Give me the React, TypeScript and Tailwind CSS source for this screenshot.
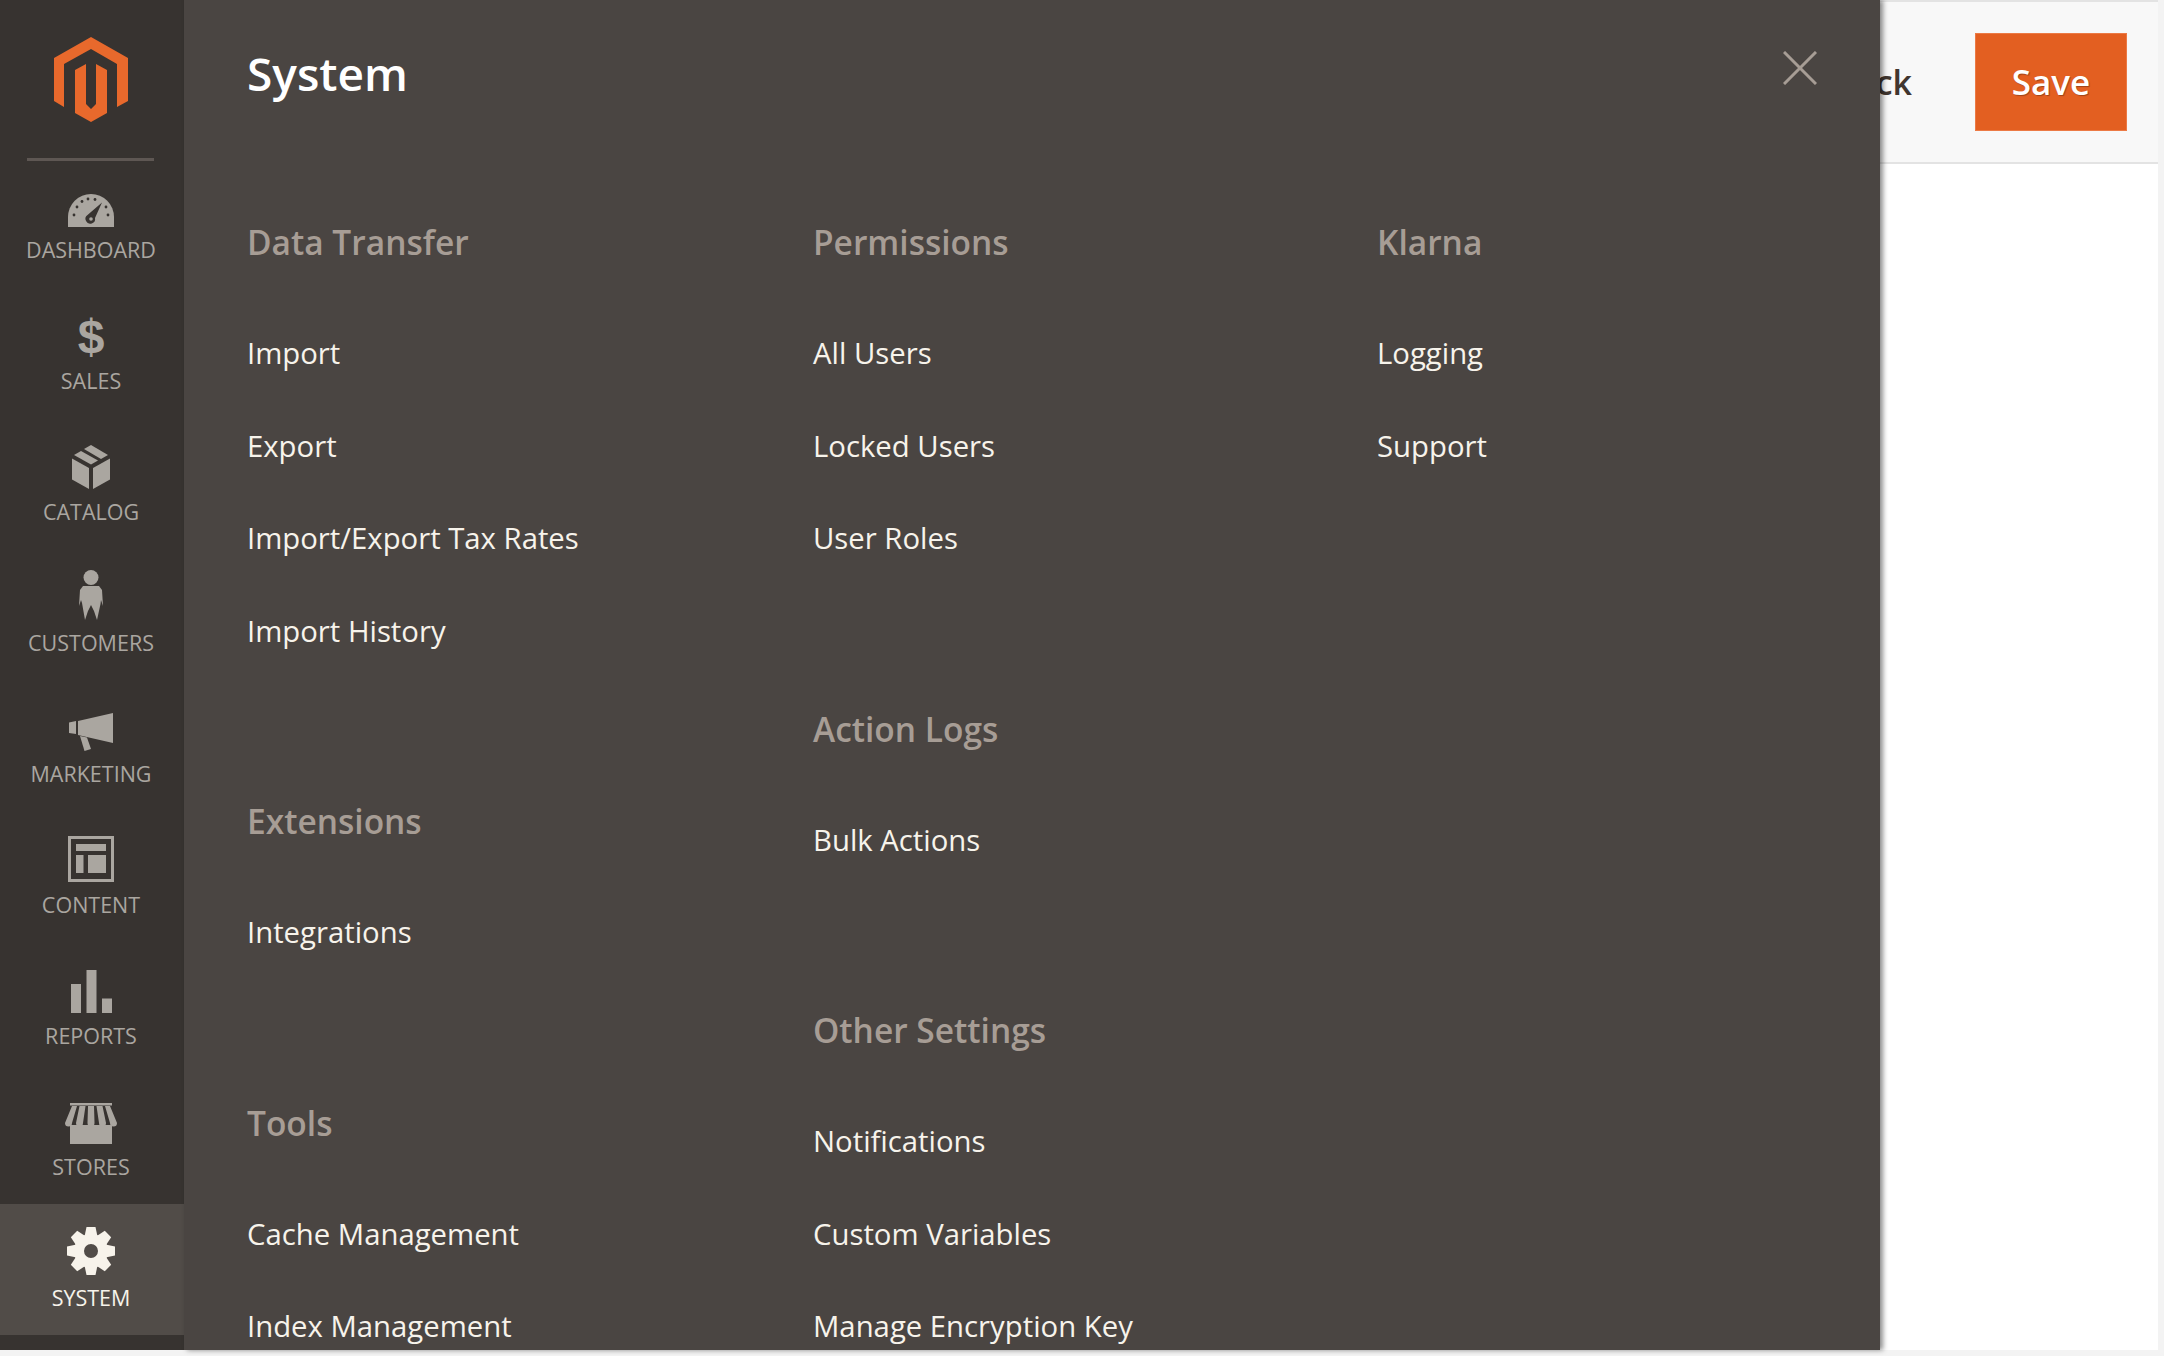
const columns = [
  [
    { title: 'Data Transfer', links: ['Import', 'Export', 'Import/Export Tax Rates', 'Import History'] },
    { title: 'Extensions', links: ['Integrations'] },
    { title: 'Tools', links: ['Cache Management', 'Index Management'] },
  ],
  [
    { title: 'Permissions', links: ['All Users', 'Locked Users', 'User Roles'] },
    { title: 'Action Logs', links: ['Bulk Actions'] },
    { title: 'Other Settings', links: ['Notifications', 'Custom Variables', 'Manage Encryption Key'] },
  ],
  [{ title: 'Klarna', links: ['Logging', 'Support'] }],
];

function DashboardIcon() {
  return (
    <svg width="46" height="33" viewBox="0 0 46 33">
      <path d="M0 33V23A23 23 0 0 1 46 23V33Z" fill="currentColor" />
      <g fill="#373330">
        <circle cx="6" cy="21" r="1.400" />
        <circle cx="9" cy="13" r="1.400" />
        <circle cx="14" cy="7.500" r="1.400" />
        <circle cx="20" cy="5" r="1.400" />
        <circle cx="27" cy="5.500" r="1.400" />
        <circle cx="38" cy="13" r="1.400" />
        <circle cx="40" cy="21" r="1.400" />
        <path d="M34 8.500 27 24A4.800 4.800 0 1 1 19.500 21Z" />
      </g>
      <circle cx="23" cy="25" r="1.800" fill="currentColor" />
    </svg>
  );
}

function CatalogIcon() {
  return (
    <svg width="38" height="44" viewBox="0 0 38 44" fill="currentColor">
      <path d="M0 13.500 17 23V44L0 34.500Z" />
      <path d="M21 23 38 13.500V34.500L21 44Z" />
      <path d="M2 10 9 6 26 15.500 19 19.500Z" />
      <path d="M12 4 19 0 36 10 29 14Z" />
    </svg>
  );
}

function CustomersIcon() {
  return (
    <svg width="24" height="50" viewBox="0 0 24 50" fill="currentColor">
      <circle cx="12" cy="7.500" r="7.500" />
      <path d="M4 16H20L23 20 24 36 22 30 21.500 34 18 50 15 41 12 35 9 41 6 50 3 33 2 30 0 36 1 20Z" />
    </svg>
  );
}

function MarketingIcon() {
  return (
    <svg width="45" height="38" viewBox="0 0 45 38" fill="currentColor">
      <path d="M0 9.500 7 8V21L0 20Z" />
      <path d="M9 8 44 0V30L9 22Z" />
      <path d="M11 23 18 24.500 22 36 15.500 38Z" />
    </svg>
  );
}

function ContentIcon() {
  return (
    <svg width="46" height="46" viewBox="0 0 46 46" fill="currentColor">
      <path fillRule="evenodd" d="M0 0H46V46H0ZM3 3V43H43V3Z" />
      <rect x="8" y="8" width="30" height="7" />
      <rect x="8" y="19" width="7.500" height="18" />
      <rect x="20" y="19" width="18" height="18" />
    </svg>
  );
}

function ReportsIcon() {
  return (
    <svg width="41" height="43" viewBox="0 0 41 43" fill="currentColor">
      <rect x="0" y="14" width="10" height="29" />
      <rect x="15.500" y="0" width="10" height="43" />
      <rect x="31" y="28.500" width="10" height="14.500" />
    </svg>
  );
}

function StoresIcon() {
  return (
    <svg width="52" height="41" viewBox="0 0 52 41" fill="currentColor">
      <rect x="5" y="0" width="42" height="2.500" />
      <rect x="5" y="22" width="42" height="19" />
      <path d="M7 3H12L7 20A3.500 3.500 0 0 1 0 20Z" />
      <path d="M14.500 3H20.500L18 20A3.500 3.500 0 0 1 11 20Z" />
      <path d="M23 3H29L29.500 20A3.500 3.500 0 0 1 22.500 20Z" />
      <path d="M31.500 3H37.500L41 20A3.500 3.500 0 0 1 34 20Z" />
      <path d="M40 3H45L52 20A3.500 3.500 0 0 1 45 20Z" />
    </svg>
  );
}

function SystemIcon() {
  return (
    <svg width="48" height="48" viewBox="-24 -24 48 48" fill="currentColor">
      {[0, 45, 90, 135, 180, 225, 270, 315].map((a) => (
        <path key={a} d="M-4.500 -24H4.500L7 -12H-7Z" transform={`rotate(${a})`} />
      ))}
      <path fillRule="evenodd" d="M-17 0A17 17 0 1 1 17 0A17 17 0 1 1 -17 0ZM-7 0A7 7 0 1 0 7 0A7 7 0 1 0 -7 0Z" />
    </svg>
  );
}

const navItems = [
  { label: 'DASHBOARD', icon: <DashboardIcon /> },
  { label: 'SALES', icon: <span className="font-['Liberation_Sans',sans-serif] text-[48px] font-bold leading-[42px]">$</span> },
  { label: 'CATALOG', icon: <CatalogIcon /> },
  { label: 'CUSTOMERS', icon: <CustomersIcon /> },
  { label: 'MARKETING', icon: <MarketingIcon /> },
  { label: 'CONTENT', icon: <ContentIcon /> },
  { label: 'REPORTS', icon: <ReportsIcon /> },
  { label: 'STORES', icon: <StoresIcon /> },
  { label: 'SYSTEM', icon: <SystemIcon />, active: true },
];

function Sidebar() {
  return (
    <aside className="flex w-[184px] shrink-0 flex-col bg-[#373330]">
      <div className="relative h-[156px] shrink-0">
        <svg className="absolute left-[54px] top-[37px]" width="74" height="85" viewBox="0 0 74 85" fill="#e8692c">
          <path d="M37 0 74 21V64L63 70V27L37 12 10 27V70L0 64V21Z" />
          <path d="M21 33 32 27V67L37 72 42 67V27L53 33V76L37 85 21 76Z" />
        </svg>
      </div>
      {navItems.map((item, i) => (
        <div
          key={item.label}
          className={
            item.active
              ? 'relative flex h-[131px] shrink-0 flex-col items-center bg-[#514c48] pr-[2px] text-[#f7f3eb]'
              : 'relative flex h-[131px] shrink-0 flex-col items-center pr-[2px] text-[#aaa6a0]'
          }
        >
          {i === 0 && <div className="absolute left-[27px] top-[2px] h-[3px] w-[127px] bg-[#5e5753]" />}
          <div className="flex h-[71px] w-full items-end justify-center">{item.icon}</div>
          <div className="mt-[11px] whitespace-nowrap text-[21.5px] leading-[24px]">{item.label}</div>
        </div>
      ))}
    </aside>
  );
}

function MenuPanel() {
  return (
    <div className="absolute inset-y-0 left-0 w-[1696px] overflow-hidden bg-[#4a4542] pl-[63px] shadow-[3px_0_5px_rgba(0,0,0,0.45)]">
      <h1 className="flex h-[150px] items-start pt-[41px] text-[46px] font-semibold leading-[64px] text-white">System</h1>
      <svg className="absolute left-[1599px] top-[51px]" width="34" height="34" viewBox="0 0 34 34" stroke="#a79d95" strokeWidth="3">
        <path d="M1 1 33 33M33 1 1 33" />
      </svg>
      <div className="grid grid-cols-[566px_564px_1fr] pt-[67px]">
        {columns.map((sections, c) => (
          <div key={c} className="flex flex-col gap-[118px]">
            {sections.map((s) => (
              <section key={s.title}>
                <h2 className="mb-[41px] h-[50px] text-[33.5px] font-semibold leading-[50px] text-[#a79d95]">{s.title}</h2>
                {s.links.map((l) => (
                  <a key={l} className="flex h-[92.5px] items-center text-[29.3px] text-[#f7f3eb]">
                    {l}
                  </a>
                ))}
              </section>
            ))}
          </div>
        ))}
      </div>
    </div>
  );
}

export default function App() {
  return (
    <div className="h-[1356px] w-[2164px] overflow-hidden bg-[#f3f3f3] font-['Open_Sans',sans-serif]">
      <div className="flex h-[1350px] w-full">
        <Sidebar />
        <main className="relative flex flex-1 flex-col pr-[6px]">
          <header className="flex h-[164px] shrink-0 items-center justify-end border-y-2 border-[#e3e3e3] bg-[#f8f8f8] pr-[31px]">
            <a className="mr-[63px] text-[34px] font-semibold text-[#41362f]">Back</a>
            <button className="h-[98px] w-[152px] border border-[#ec7a45] bg-[#e35f21] text-[35px] font-semibold text-white [text-shadow:1px_1px_1px_rgba(0,0,0,0.3)]">
              Save
            </button>
          </header>
          <div className="flex-1 bg-white" />
          <MenuPanel />
        </main>
      </div>
    </div>
  );
}
